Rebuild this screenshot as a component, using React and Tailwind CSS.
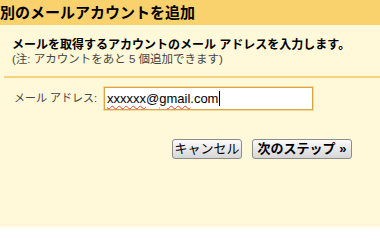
import React from "react";

export default function App() {
  const jp = { fontFamily: '"Liberation Sans", "Noto Sans CJK JP", sans-serif' };
  return (
    <div className="w-[380px] h-[227px] bg-[#fff8d9] overflow-hidden flex flex-col" style={jp}>
      <div className="h-[25px] bg-[#f9d26e] text-[15px] font-bold leading-[25px] text-black pl-0 whitespace-nowrap">
        別のメールアカウントを追加
      </div>
      <div className="pl-[12px] pt-[13px] pb-[10px]">
        <div className="text-[12px] font-bold leading-[14px] text-black whitespace-nowrap">
          メールを取得するアカウントのメール アドレスを入力します。
        </div>
        <div className="text-[11.5px] leading-[14px] text-[#444] whitespace-nowrap">
          (注: アカウントをあと 5 個追加できます)
        </div>
      </div>
      <div className="ml-[4px] h-[2px] bg-[#f6d47e]" />
      <div className="flex items-center mt-[9px]">
        <div className="w-[104px] shrink-0 pl-[14px] text-[11px] text-[#444] whitespace-nowrap">
          メール アドレス:
        </div>
        <div className="w-[209px] h-[23px] bg-white border border-[#d9a441] shadow-[0_0_0_1px_#f5dc9c] flex items-center pl-[2px] text-[13px] text-black whitespace-nowrap">
          <span className="underline decoration-wavy decoration-[#e04040] decoration-1 underline-offset-2">xxxxxx</span>
          <span>@</span>
          <span className="underline decoration-wavy decoration-[#e04040] decoration-1 underline-offset-2">gmail</span>
          <span>.com</span>
          <span className="inline-block w-[1px] h-[15px] bg-black ml-[1px]" />
        </div>
      </div>
      <div className="flex justify-end gap-[10px] pr-[28px] mt-[29px]">
        <button className="w-[70px] h-[20px] rounded-[3px] border border-[#8c8c8c] bg-gradient-to-b from-[#fbfbfb] to-[#d6d6d6] text-[13px] leading-[18px] text-black">
          キャンセル
        </button>
        <button className="w-[100px] h-[20px] rounded-[3px] border border-[#8c8c8c] bg-gradient-to-b from-[#fbfbfb] to-[#d6d6d6] text-[13px] font-bold leading-[18px] text-black">
          次のステップ »
        </button>
      </div>
    </div>
  );
}
